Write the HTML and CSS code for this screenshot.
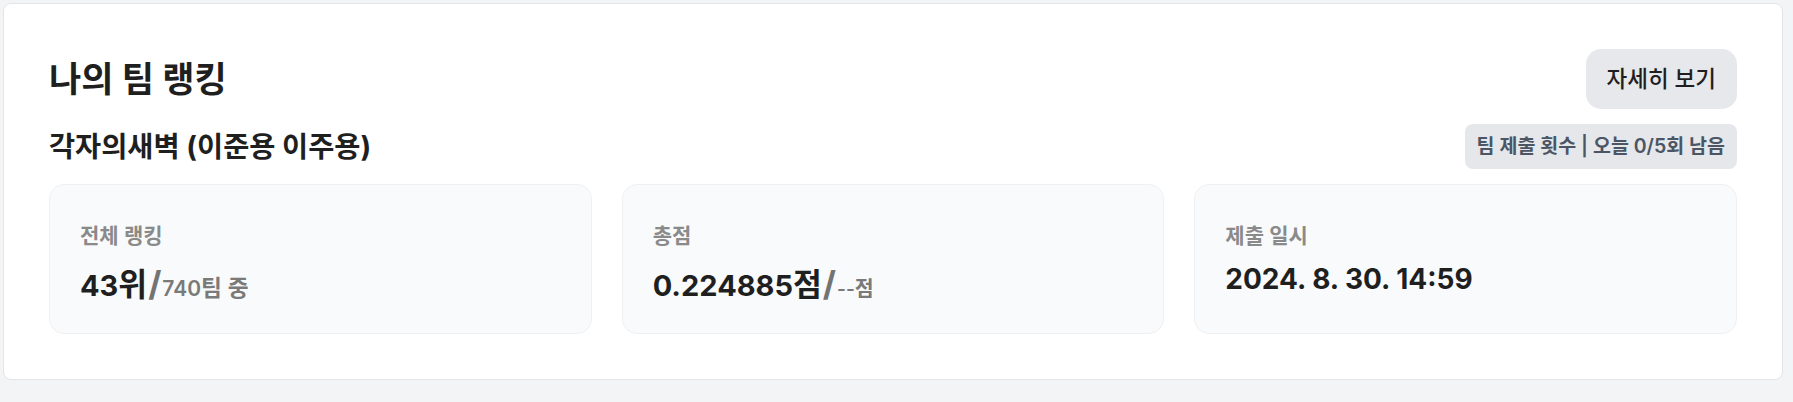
FILE: index.html
```html
<!DOCTYPE html>
<html lang="ko">
<head>
<meta charset="utf-8">
<title>나의 팀 랭킹</title>
<link rel="stylesheet" href="styles.css">
</head>
<body>
<div class="page">
  <section class="panel">
    <div class="panel-head">
      <h2 class="title">나의 팀 랭킹</h2>
      <button class="btn-detail" type="button">자세히 보기</button>
    </div>
    <div class="team-row">
      <h3 class="team-name">각자의새벽 (이준용 이주용)</h3>
      <span class="quota">팀 제출 횟수 | 오늘 0/5회 남음</span>
    </div>
    <div class="stats">
      <div class="stat">
        <div class="stat-label">전체 랭킹</div>
        <div class="stat-value"><span class="main">43<span class="unit">위</span></span><span class="sep">/</span><span class="sub">740<span class="unit">팀 중</span></span></div>
      </div>
      <div class="stat">
        <div class="stat-label">총점</div>
        <div class="stat-value"><span class="main">0.224885<span class="unit">점</span></span><span class="sep">/</span><span class="sub small">--<span class="unit">점</span></span></div>
      </div>
      <div class="stat">
        <div class="stat-label">제출 일시</div>
        <div class="stat-value"><span class="main date">2024. 8. 30. 14:59</span></div>
      </div>
    </div>
  </section>
</div>
</body>
</html>
```

FILE: styles.css
```css
* { box-sizing: border-box; }

html, body {
  margin: 0;
  background: #f3f4f6;
  font-family: "Inter", "Noto Sans CJK KR", sans-serif;
  color: #1f1f1f;
}

.page {
  padding: 3px 10px 22px 3px;
}

.panel {
  background: #ffffff;
  border: 1px solid #e3e5e9;
  border-radius: 8px;
  padding: 45px;
}

.panel-head {
  display: flex;
  justify-content: space-between;
  align-items: center;
  height: 60px;
}

.title {
  margin: 0;
  font-size: 35px;
  font-weight: 700;
  line-height: 44px;
  color: #1f1f1f;
}

.btn-detail {
  font-family: inherit;
  font-size: 22.5px;
  font-weight: 500;
  line-height: 30px;
  color: #1f1f1f;
  background: #e7e8ec;
  border: none;
  border-radius: 15px;
  padding: 15px 21px;
  height: 60px;
}

.team-row {
  display: flex;
  justify-content: space-between;
  align-items: center;
  margin-top: 15px;
  height: 45px;
}

.team-name {
  margin: 0;
  font-size: 28.4px;
  font-weight: 700;
  line-height: 36px;
  color: #1f1f1f;
}

.quota {
  font-size: 19.5px;
  font-weight: 600;
  line-height: 25px;
  color: #4b5563;
  background: #e5e7eb;
  border-radius: 8px;
  padding: 10px 12px;
}

.stats {
  display: grid;
  grid-template-columns: repeat(3, 1fr);
  gap: 30px;
  margin-top: 15px;
}

.stat {
  height: 150px;
  background: #f9fafb;
  border: 1px solid #eff0f2;
  border-radius: 15px;
  padding: 37px 30px 0;
  display: flex;
  flex-direction: column;
  gap: 10px;
}

.stat-label {
  font-size: 21px;
  font-weight: 600;
  line-height: 28px;
  color: #8a8a8a;
}

.stat-value {
  display: flex;
  align-items: baseline;
  line-height: 38px;
}

.stat-value .main {
  font-size: 29px;
  font-weight: 700;
  color: #1f1f1f;
}

.stat-value .main.date {
  font-size: 28px;
}

.stat-value .unit {
  font-size: 1.08em;
}

.stat-value .sep {
  font-size: 34px;
  font-weight: 700;
  line-height: 48px;
  color: #737373;
  margin: 0 1px;
}

.stat-value .sub {
  font-size: 21px;
  font-weight: 600;
  color: #7a7a7a;
}

.stat-value .sub.small {
  font-size: 19px;
}
```
